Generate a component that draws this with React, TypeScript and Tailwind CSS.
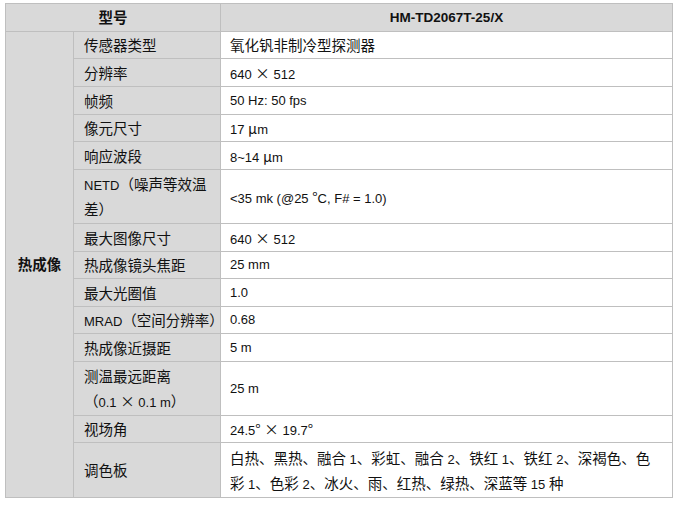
import React from 'react'

const CJK = /([\u2E80-\uFFEF\u00B0\u00D7\u03BC]+)/

// split mixed text so CJK runs get the bigger CJK face
const mixed = (s: string) =>
  s
    .split(CJK)
    .filter(Boolean)
    .map((part, i) =>
      CJK.test(part) ? (
        <span key={i} className="text-[14.5px] font-['Noto_Sans_CJK_SC',sans-serif]">
          {part}
        </span>
      ) : (
        <span key={i}>{part}</span>
      )
    )

type Row = { label: string[]; value: string[]; h: string }

const rows: Row[] = [
  { label: ['传感器类型'], value: ['氧化钒非制冷型探测器'], h: 'h-[27px]' },
  { label: ['分辨率'], value: ['640 × 512'], h: 'h-[28px]' },
  { label: ['帧频'], value: ['50 Hz: 50 fps'], h: 'h-[28px]' },
  { label: ['像元尺寸'], value: ['17 μm'], h: 'h-[27px]' },
  { label: ['响应波段'], value: ['8~14 μm'], h: 'h-[28px]' },
  { label: ['NETD（噪声等效温', '差）'], value: ['<35 mk (@25 °C, F# = 1.0)'], h: 'h-[54px]' },
  { label: ['最大图像尺寸'], value: ['640 × 512'], h: 'h-[28px]' },
  { label: ['热成像镜头焦距'], value: ['25 mm'], h: 'h-[27px]' },
  { label: ['最大光圈值'], value: ['1.0'], h: 'h-[28px]' },
  { label: ['MRAD（空间分辨率）'], value: ['0.68'], h: 'h-[27px]' },
  { label: ['热成像近摄距'], value: ['5 m'], h: 'h-[28px]' },
  { label: ['测温最远距离', '（0.1 × 0.1 m）'], value: ['25 m'], h: 'h-[54px]' },
  { label: ['视场角'], value: ['24.5° × 19.7°'], h: 'h-[27px]' },
  {
    label: ['调色板'],
    value: [
      '白热、黑热、融合 1、彩虹、融合 2、铁红 1、铁红 2、深褐色、色',
      '彩 1、色彩 2、冰火、雨、红热、绿热、深蓝等 15 种',
    ],
    h: 'h-[55px]',
  },
]

const lines = (arr: string[]) => (
  <div className="flex flex-col gap-[5px]">
    {arr.map((l, i) => (
      <div key={i} className="whitespace-nowrap leading-[20px] h-[20px]">
        {mixed(l)}
      </div>
    ))}
  </div>
)

export default function App() {
  return (
    <div className="min-h-screen bg-white pt-[3px] pl-[5px] text-[13px] text-[#111] font-['Liberation_Sans','Noto_Sans_CJK_SC',sans-serif]">
      <table className="table-fixed border-collapse w-[667px]">
        <colgroup>
          <col className="w-[68px]" />
          <col className="w-[147px]" />
          <col className="w-[452px]" />
        </colgroup>
        <tbody>
          <tr className="h-[28px] bg-[#d9d9d9]">
            <td colSpan={2} className="border border-[#bfbfbf] p-0 text-center font-bold leading-[20px]">
              {mixed('型号')}
            </td>
            <td className="border border-[#bfbfbf] p-0 text-center font-bold leading-[20px] text-[13.5px]">
              HM-TD2067T-25/X
            </td>
          </tr>
          {rows.map((r, i) => (
            <tr key={i} className={r.h}>
              {i === 0 && (
                <td
                  rowSpan={rows.length}
                  className="border border-[#bfbfbf] bg-[#d9d9d9] p-0 text-center font-bold leading-[20px]"
                >
                  {mixed('热成像')}
                </td>
              )}
              <td className="border border-[#bfbfbf] bg-[#d9d9d9] p-0 pl-[10px] align-middle">
                {lines(r.label)}
              </td>
              <td className="border border-[#bfbfbf] bg-white p-0 pl-[9px] align-middle">
                {lines(r.value)}
              </td>
            </tr>
          ))}
        </tbody>
      </table>
    </div>
  )
}
